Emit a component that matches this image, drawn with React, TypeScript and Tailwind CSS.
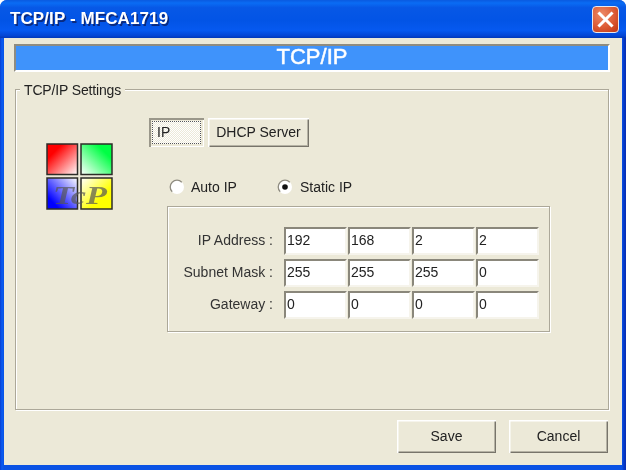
const font = "[font-family:'Liberation_Sans',Arial,sans-serif]";

const Field = ({ value }: { value: string }) => (
  <div className="w-[63px] h-[28px] bg-white border-2 border-t-[#8a877b] border-l-[#8a877b] border-b-[#f6f4ec] border-r-[#f6f4ec] pl-px pb-px flex items-center text-[14px] text-[#222]">
    {value}
  </div>
);

const Row = ({ label, values }: { label: string; values: string[] }) => (
  <div className="flex items-center">
    <div className="w-[105px] mr-[11px] pb-px text-right text-[14px] text-[#333] whitespace-nowrap">{label}</div>
    <div className="flex gap-px">
      {values.map((v, i) => (
        <Field key={i} value={v} />
      ))}
    </div>
  </div>
);

const Radio = ({ checked }: { checked?: boolean }) => (
  <svg width="16" height="16" viewBox="0 0 16 16" className="shrink-0">
    <circle cx="8" cy="8" r="7" fill="#fff" />
    <path d="M3.2 12.8A6.6 6.6 0 0 1 12.8 3.2" stroke="#8f8c80" strokeWidth="1.3" fill="none" />
    {checked && <circle cx="8" cy="8" r="2.8" fill="#111" />}
  </svg>
);

const Logo = () => (
  <svg width="68" height="67" viewBox="0 0 68 67" className="shrink-0">
    <defs>
      <linearGradient id="r" x1="0" y1="0" x2="1" y2="1">
        <stop offset="0.25" stopColor="#ff0000" />
        <stop offset="1" stopColor="#ffffff" />
      </linearGradient>
      <linearGradient id="g" x1="1" y1="0" x2="0" y2="1">
        <stop offset="0.25" stopColor="#00ff44" />
        <stop offset="1" stopColor="#ffffff" />
      </linearGradient>
      <linearGradient id="b" x1="0" y1="1" x2="1" y2="0">
        <stop offset="0.2" stopColor="#0000ff" />
        <stop offset="1" stopColor="#ffffff" />
      </linearGradient>
      <linearGradient id="y" x1="1" y1="1" x2="0" y2="0">
        <stop offset="0.35" stopColor="#ffff00" />
        <stop offset="1" stopColor="#ffffff" />
      </linearGradient>
    </defs>
    <g stroke="#2c2c28" strokeWidth="1.5">
      <rect x="1" y="1" width="30.5" height="30.5" fill="url(#r)" />
      <rect x="35" y="1" width="31" height="30.5" fill="url(#g)" />
      <rect x="1" y="35" width="30.5" height="31" fill="url(#b)" />
      <rect x="35" y="35" width="31" height="31" fill="url(#y)" />
    </g>
    <text
      x="7"
      y="61"
      fontFamily="'Liberation Serif', serif"
      fontStyle="italic"
      fontWeight="bold"
      fontSize="25"
      fill="#555555"
      fillOpacity="0.7"
      textLength="54"
      lengthAdjust="spacingAndGlyphs"
    >
      TcP
    </text>
  </svg>
);

const Btn = ({ label }: { label: string }) => (
  <button className="w-[99px] h-[33px] bg-[#ece9d8] text-[14px] text-[#222] shadow-[inset_1.5px_1.5px_0_#fff,inset_-1px_-1px_0_#77746a,inset_-2px_-2px_0_#b5b2a4]">
    {label}
  </button>
);

export default function App() {
  return (
    <div className={`w-[626px] h-[470px] flex flex-col rounded-t-[7px] overflow-hidden bg-[linear-gradient(90deg,#0a3ed0_0px,#0a5cf2_2px,#0a52e4_4px,#0a52e4_622px,#0438c8_624px,#0a2fb0_626px)] ${font} blur-[0.35px]`}>
      <div className="h-[38px] shrink-0 flex items-center justify-between pl-[10px] pr-[7px] bg-[linear-gradient(180deg,#0a5ae0_0%,#0a6cf4_8%,#0758e6_20%,#0254e6_55%,#0659f0_80%,#0446d4_94%,#0238b8_100%)]">
        <span className="text-white font-bold text-[17px] tracking-[0.1px] [text-shadow:1.5px_1.5px_0_#0a2a80] whitespace-nowrap">
          TCP/IP - MFCA1719
        </span>
        <div className="w-[27px] h-[27px] rounded-[4px] border border-[#e8e8ee] bg-[radial-gradient(circle_at_35%_30%,#ec8a68,#dc5a34_55%,#bf3512)] flex items-center justify-center">
          <svg width="17" height="17" viewBox="0 0 17 17">
            <path d="M2.5 2.5L14.5 14.5M14.5 2.5L2.5 14.5" stroke="#fff" strokeWidth="3" strokeLinecap="square" />
          </svg>
        </div>
      </div>

      <div className="flex-1 mx-[4px] mb-[5px] bg-[#ece9d8] pl-[10px] pr-[12px] pt-[6px] flex flex-col">
        <div className="h-[28px] shrink-0 bg-[#3f93fb] border-2 border-t-[#8f8c80] border-l-[#8f8c80] border-b-white border-r-white pb-[2px] flex items-center justify-center text-white text-[22px] leading-[22px] font-normal [-webkit-text-stroke:0.5px_#fff]">
          TCP/IP
        </div>

        <div className="relative mt-[17px] mx-px h-[321px] shrink-0 border border-[#aca899] shadow-[inset_1px_1px_0_#fff,1px_1px_0_#fff] flex pl-[30px]">
          <span className="absolute left-[4px] -top-[8px] px-[4px] bg-[#ece9d8] text-[14px] tracking-[-0.15px] text-[#222] leading-[16px]">
            TCP/IP Settings
          </span>
          <div className="mt-[53px]">
            <Logo />
          </div>
          <div className="ml-[35px] pt-[28px] flex flex-col">
            <div className="flex gap-[4px]">
              <button className="w-[55px] h-[29px] p-[3px] bg-[#ece9d8] shadow-[inset_2px_2px_0_#9a978a,inset_-1px_-1px_0_#fff]">
                <span className="h-full pl-[4px] flex items-center border border-dotted border-[#555] bg-[repeating-conic-gradient(#ffffff_0_25%,#ece9d8_0_50%)] bg-[length:2px_2px] text-[14px] text-[#222]">
                  IP
                </span>
              </button>
              <button className="w-[101px] h-[29px] bg-[#ece9d8] text-[14px] text-[#222] shadow-[inset_1.5px_1.5px_0_#fff,inset_-1px_-1px_0_#77746a,inset_-2px_-2px_0_#b5b2a4]">
                DHCP Server
              </button>
            </div>
            <div className="mt-[32px] ml-[20px] h-[16px] flex items-center text-[14px] text-[#222]">
              <Radio />
              <span className="ml-[6px] w-[86px]">Auto IP</span>
              <Radio checked />
              <span className="ml-[7px]">Static IP</span>
            </div>
            <div className="mt-[11px] ml-[18px] w-[383px] h-[126px] border border-[#aca899] shadow-[inset_1px_1px_0_#fff,1px_1px_0_#fff] pt-[20px] flex flex-col gap-[4px]">
              <Row label="IP Address :" values={["192", "168", "2", "2"]} />
              <Row label="Subnet Mask :" values={["255", "255", "255", "0"]} />
              <Row label="Gateway :" values={["0", "0", "0", "0"]} />
            </div>
          </div>
        </div>

        <div className="mt-[10px] pr-[2px] flex justify-end gap-[13px]">
          <Btn label="Save" />
          <Btn label="Cancel" />
        </div>
      </div>
    </div>
  );
}
